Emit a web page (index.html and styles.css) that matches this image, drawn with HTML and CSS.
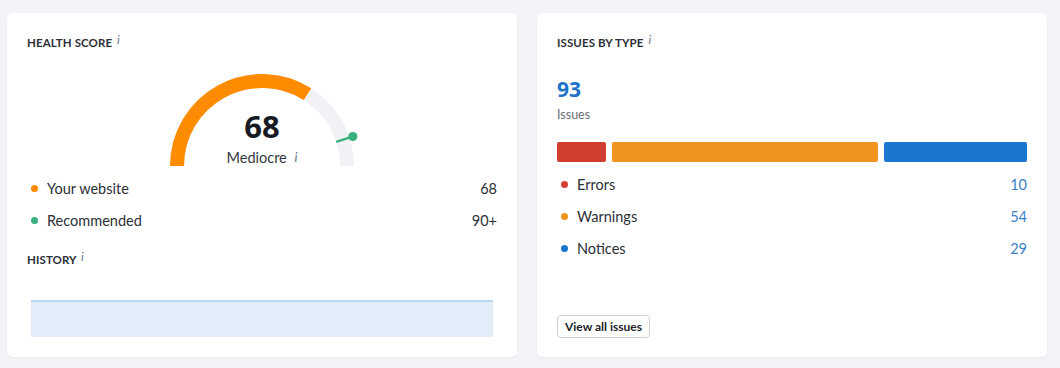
FILE: index.html
```html
<!DOCTYPE html>
<html>
<head>
<meta charset="utf-8">
<link rel="stylesheet" href="styles.css">
</head>
<body>
<div class="page">
  <section class="card">
    <h2 class="title">Health Score <span class="info">i</span></h2>
    <div class="gauge">
      <svg class="gauge-svg" width="200" height="106" viewBox="0 0 200 106">
        <path d="M 15 106 A 85 85 0 0 1 185 106" fill="none" stroke="#f0f2f5" stroke-width="14"/>
        <path d="M 15 106 A 85 85 0 0 1 145.5 34.2" fill="none" stroke="#ff8c00" stroke-width="14"/>
        <line x1="174.2" y1="81.9" x2="190.4" y2="76.6" stroke="#3ab07e" stroke-width="2.2"/>
        <circle cx="190.8" cy="76.5" r="4.6" fill="#3ab07e"/>
      </svg>
      <div class="gauge-text">
        <div class="score">68</div>
        <div class="grade">Mediocre <span class="info">i</span></div>
      </div>
    </div>
    <ul class="legend legend-health">
      <li class="row"><span class="dot dot-orange"></span><span class="label">Your website</span><span class="value">68</span></li>
      <li class="row"><span class="dot dot-green"></span><span class="label">Recommended</span><span class="value">90+</span></li>
    </ul>
    <h2 class="title history-title">History <span class="info">i</span></h2>
    <div class="chart"></div>
  </section>
  <section class="card">
    <h2 class="title">Issues by type <span class="info">i</span></h2>
    <div class="total">93</div>
    <div class="total-label">Issues</div>
    <div class="bars">
      <div class="bar bar-red" style="flex-grow:10"></div>
      <div class="bar bar-orange" style="flex-grow:54"></div>
      <div class="bar bar-blue" style="flex-grow:29"></div>
    </div>
    <ul class="legend legend-issues">
      <li class="row"><span class="dot dot-red"></span><span class="label">Errors</span><span class="value link">10</span></li>
      <li class="row"><span class="dot dot-orange2"></span><span class="label">Warnings</span><span class="value link">54</span></li>
      <li class="row"><span class="dot dot-blue"></span><span class="label">Notices</span><span class="value link">29</span></li>
    </ul>
    <div class="actions"><button class="btn">View all issues</button></div>
  </section>
</div>
</body>
</html>
```
FILE: styles.css
```css
* { box-sizing: border-box; }
html, body { margin: 0; padding: 0; }
body {
  background: #f3f4f8;
  font-family: Lato, "Open Sans", sans-serif;
  color: #2b2f36;
  width: 1060px;
  height: 368px;
  overflow: hidden;
}
.page {
  display: flex;
  gap: 20px;
  padding: 13px 13px 0 7px;
}
.card {
  width: 510px;
  height: 344px;
  background: #fff;
  border-radius: 6px;
  box-shadow: 0 1px 2px rgba(30, 40, 70, 0.06);
  padding: 20px;
  display: flex;
  flex-direction: column;
}
.title {
  margin: 0;
  font-size: 11.5px;
  line-height: 20px;
  height: 20px;
  font-weight: 700;
  text-transform: uppercase;
  color: #2b2f36;
  letter-spacing: 0.1px;
}
.info {
  font-style: italic;
  font-weight: 400;
  color: #6b7488;
  font-size: 12px;
  margin-left: 2px;
  position: relative;
  top: -3px;
  text-transform: none;
}
.gauge {
  position: relative;
  margin-top: 7px;
  height: 106px;
  display: flex;
  justify-content: center;
}
.gauge-svg { display: block; }
.gauge-text {
  position: absolute;
  left: 0;
  right: 0;
  top: 48px;
  text-align: center;
}
.score {
  font-family: "Open Sans", Lato, sans-serif;
  font-size: 31px;
  font-weight: 700;
  line-height: 36px;
  color: #171a22;
}
.grade {
  font-size: 14.5px;
  line-height: 18px;
  margin-top: 5px;
  color: #333841;
}
.grade .info { top: -1px; font-size: 13px; margin-left: 4px; }
.legend {
  list-style: none;
  margin: 0;
  padding: 0;
}
.legend-health { margin-top: 6px; }
.row {
  display: flex;
  align-items: center;
  height: 32px;
  font-size: 14.5px;
  color: #2b2f36;
}
.dot {
  width: 7px;
  height: 7px;
  border-radius: 50%;
  margin-left: 4px;
  margin-right: 9px;
  flex: none;
}
.dot-orange { background: #ff8c00; }
.dot-green { background: #3ab07e; }
.dot-red { background: #d23f31; }
.dot-orange2 { background: #f0931f; }
.dot-blue { background: #1a76cf; }
.label { flex: 1; }
.value { text-align: right; }
.value.link { color: #3a7fc8; }
.history-title { margin-top: 14px; }
.chart {
  margin: 30px 4px 0 4px;
  height: 39px;
  background: #e3edfa;
  border-top: 2px solid #b9d6f2;
}
.total {
  margin-top: 22px;
  font-family: "Open Sans", Lato, sans-serif;
  font-size: 21px;
  font-weight: 700;
  line-height: 28px;
  color: #1a73c8;
}
.total-label {
  margin-top: 4px;
  font-size: 12.5px;
  line-height: 16px;
  color: #6b6e75;
}
.bars {
  display: flex;
  gap: 6px;
  margin-top: 19px;
  height: 20px;
}
.bar { flex-basis: 0; border-radius: 2px; }
.bar-red { background: #d23f31; }
.bar-orange { background: #f0931f; }
.bar-blue { background: #1a76cf; }
.legend-issues { margin-top: 6px; }
.actions { margin-top: auto; }
.btn {
  display: block;
  width: 93px;
  height: 23px;
  padding: 0;
  border: 1.5px solid #cdd0d6;
  border-radius: 4px;
  background: #fff;
  font-family: Lato, sans-serif;
  font-size: 12px;
  font-weight: 700;
  color: #1f2329;
  margin-bottom: -1px;
}
```
